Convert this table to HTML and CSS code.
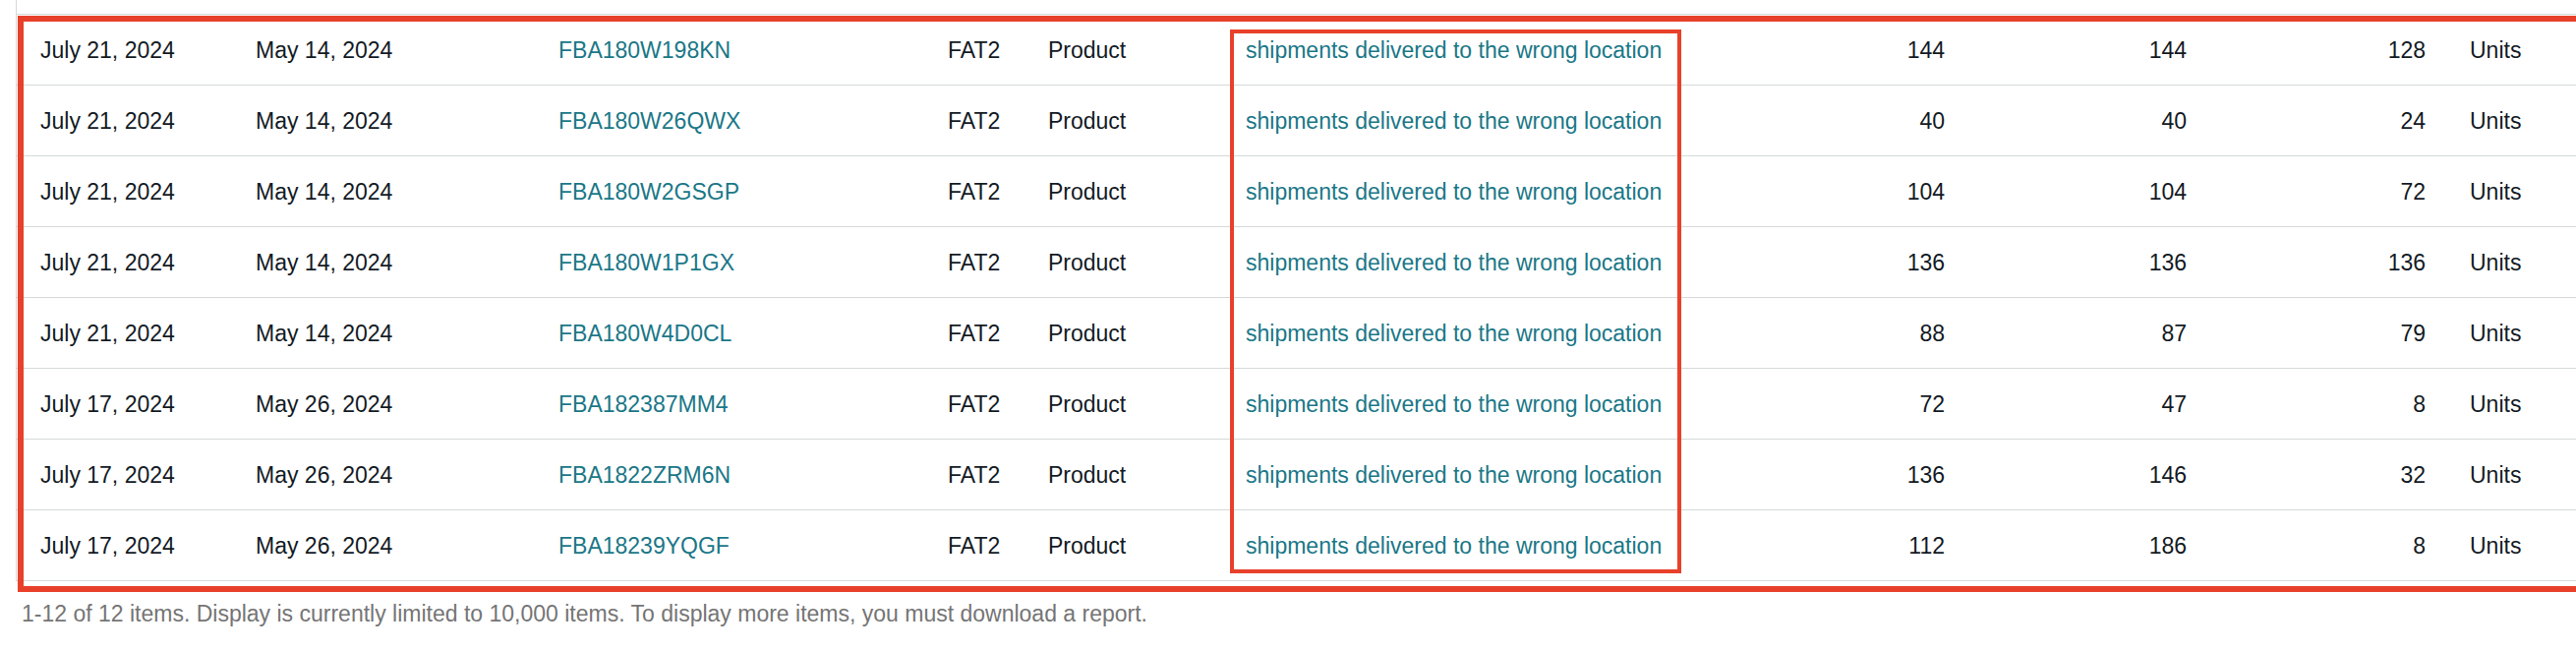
FILE: index.html
```html
<!DOCTYPE html>
<html lang="en">
<head>
<meta charset="utf-8">
<title>Shipments</title>
<link rel="stylesheet" href="styles.css">
</head>
<body>
<div class="page">
  <div class="table-wrap">
    <div class="table">
      <div class="row">
        <div class="c c1">July 21, 2024</div><div class="c c2">May 14, 2024</div><div class="c c3 link">FBA180W198KN</div><div class="c c4">FAT2</div><div class="c c5">Product</div><div class="c c6 link">shipments delivered to the wrong location</div><div class="c num n1">144</div><div class="c num n2">144</div><div class="c num n3">128</div><div class="c unit">Units</div>
      </div>
      <div class="row">
        <div class="c c1">July 21, 2024</div><div class="c c2">May 14, 2024</div><div class="c c3 link">FBA180W26QWX</div><div class="c c4">FAT2</div><div class="c c5">Product</div><div class="c c6 link">shipments delivered to the wrong location</div><div class="c num n1">40</div><div class="c num n2">40</div><div class="c num n3">24</div><div class="c unit">Units</div>
      </div>
      <div class="row">
        <div class="c c1">July 21, 2024</div><div class="c c2">May 14, 2024</div><div class="c c3 link">FBA180W2GSGP</div><div class="c c4">FAT2</div><div class="c c5">Product</div><div class="c c6 link">shipments delivered to the wrong location</div><div class="c num n1">104</div><div class="c num n2">104</div><div class="c num n3">72</div><div class="c unit">Units</div>
      </div>
      <div class="row">
        <div class="c c1">July 21, 2024</div><div class="c c2">May 14, 2024</div><div class="c c3 link">FBA180W1P1GX</div><div class="c c4">FAT2</div><div class="c c5">Product</div><div class="c c6 link">shipments delivered to the wrong location</div><div class="c num n1">136</div><div class="c num n2">136</div><div class="c num n3">136</div><div class="c unit">Units</div>
      </div>
      <div class="row">
        <div class="c c1">July 21, 2024</div><div class="c c2">May 14, 2024</div><div class="c c3 link">FBA180W4D0CL</div><div class="c c4">FAT2</div><div class="c c5">Product</div><div class="c c6 link">shipments delivered to the wrong location</div><div class="c num n1">88</div><div class="c num n2">87</div><div class="c num n3">79</div><div class="c unit">Units</div>
      </div>
      <div class="row">
        <div class="c c1">July 17, 2024</div><div class="c c2">May 26, 2024</div><div class="c c3 link">FBA182387MM4</div><div class="c c4">FAT2</div><div class="c c5">Product</div><div class="c c6 link">shipments delivered to the wrong location</div><div class="c num n1">72</div><div class="c num n2">47</div><div class="c num n3">8</div><div class="c unit">Units</div>
      </div>
      <div class="row">
        <div class="c c1">July 17, 2024</div><div class="c c2">May 26, 2024</div><div class="c c3 link">FBA1822ZRM6N</div><div class="c c4">FAT2</div><div class="c c5">Product</div><div class="c c6 link">shipments delivered to the wrong location</div><div class="c num n1">136</div><div class="c num n2">146</div><div class="c num n3">32</div><div class="c unit">Units</div>
      </div>
      <div class="row">
        <div class="c c1">July 17, 2024</div><div class="c c2">May 26, 2024</div><div class="c c3 link">FBA18239YQGF</div><div class="c c4">FAT2</div><div class="c c5">Product</div><div class="c c6 link">shipments delivered to the wrong location</div><div class="c num n1">112</div><div class="c num n2">186</div><div class="c num n3">8</div><div class="c unit">Units</div>
      </div>
    </div>
    <div class="mark-outer"></div>
    <div class="mark-inner"></div>
  </div>
  <div class="footer">1-12 of 12 items. Display is currently limited to 10,000 items. To display more items, you must download a report.</div>
</div>
</body>
</html>
```

FILE: styles.css
```css
* { box-sizing: border-box; }
html, body {
  margin: 0;
  padding: 0;
  background: #ffffff;
  overflow: hidden;
}
body {
  font-family: "Liberation Sans", Arial, sans-serif;
  font-size: 23px;
  color: #131a24;
}
.page {
  width: 2620px;
}
.table-wrap {
  position: relative;
  margin-left: 16px;
  padding-top: 14px;
  border-left: 1px solid #d5d9d9;
}
.table {
  border-top: 1px solid #d5d9d9;
}
.row {
  display: grid;
  grid-template-columns: 219px 308px 396px 102px 201px 459px 300px 246px 243px 1fr;
  height: 72px;
  border-bottom: 1px solid #d5d9d9;
  align-items: center;
}
.c {
  white-space: nowrap;
  padding-left: 24px;
  line-height: 26px;
}
.link {
  color: #1a7787;
}
.num {
  text-align: right;
  padding-left: 0;
  padding-right: 24px;
}
.unit {
  padding-left: 21px;
}
.footer {
  margin-top: 20px;
  padding-left: 22px;
  color: #757575;
  font-size: 23px;
  line-height: 26px;
}
.mark-outer {
  position: absolute;
  left: 1px;
  top: 16px;
  right: -20px;
  height: 586px;
  border: 6px solid #e8412b;
}
.mark-inner {
  position: absolute;
  left: 1234px;
  top: 30px;
  width: 459px;
  height: 553px;
  border: 4px solid #e8412b;
}
```
